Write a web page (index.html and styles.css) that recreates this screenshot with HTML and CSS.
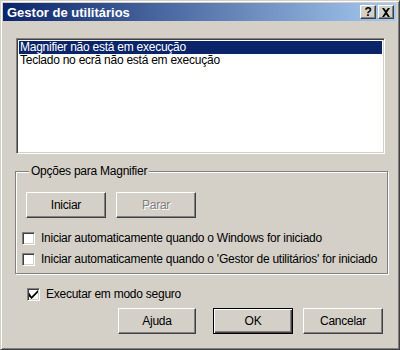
FILE: index.html
```html
<!DOCTYPE html>
<html>
<head>
<meta charset="utf-8">
<link rel="stylesheet" href="styles.css">
</head>
<body>
<div class="window">
  <div class="titlebar">
    <span class="title">Gestor de utilitários</span>
    <div class="tbtns">
      <div class="tbtn"><span class="q">?</span></div>
      <div class="tbtn">
        <svg width="10" height="9" viewBox="0 0 10 9"><path d="M1 0h2l2 2.5L7 0h2L6 4.5 9 9H7L5 6.5 3 9H1l3-4.5z" fill="#000"/></svg>
      </div>
    </div>
  </div>
  <div class="content">
    <div class="listbox">
      <div class="item selected">Magnifier não está em execução</div>
      <div class="item">Teclado no ecrã não está em execução</div>
    </div>
    <fieldset class="group">
      <legend>Opções para Magnifier</legend>
      <div class="row-btns">
        <div class="btn">Iniciar</div>
        <div class="btn disabled">Parar</div>
      </div>
      <div class="checks">
        <label class="check"><span class="box"></span><span>Iniciar automaticamente quando o Windows for iniciado</span></label>
        <label class="check"><span class="box"></span><span>Iniciar automaticamente quando o 'Gestor de utilitários' for iniciado</span></label>
      </div>
    </fieldset>
    <label class="check safe"><span class="box"><svg width="9" height="9" viewBox="0 0 7 7"><path d="M0 2v3l2 2 5-5V-0L2 5z" fill="#000"/></svg></span><span>Executar em modo seguro</span></label>
    <div class="footer">
      <div class="btn help">Ajuda</div>
      <div class="btn default"><span>OK</span></div>
      <div class="btn">Cancelar</div>
    </div>
  </div>
</div>
</body>
</html>
```
FILE: styles.css
```css
html, body {
  margin: 0;
  padding: 0;
  background: #d4d0c8;
}
body {
  font-family: "Liberation Sans", Arial, sans-serif;
  font-size: 12px;
  letter-spacing: -0.25px;
  color: #000;
}
.window {
  width: 400px;
  height: 350px;
  box-sizing: border-box;
  background: #d4d0c8;
  border: 1px solid;
  border-color: #d4d0c8 #404040 #404040 #d4d0c8;
  box-shadow: inset 1px 1px #fff, inset -1px -1px #808080;
  padding: 2px 3px 3px 2px;
  display: flex;
  flex-direction: column;
}
.titlebar {
  height: 18px;
  background: linear-gradient(to right, #0a246a, #a6caf0);
  display: flex;
  align-items: center;
  justify-content: space-between;
  padding: 0 2px 0 4px;
}
.title {
  color: #fff;
  font-weight: bold;
  font-size: 13px;
  letter-spacing: 0;
}
.tbtns {
  display: flex;
  gap: 2px;
}
.tbtn {
  width: 16px;
  height: 14px;
  box-sizing: border-box;
  background: #d4d0c8;
  border: 1px solid;
  border-color: #fff #404040 #404040 #fff;
  box-shadow: inset -1px -1px #808080;
  display: flex;
  align-items: center;
  justify-content: center;
}
.q {
  font-weight: bold;
  font-size: 12px;
  line-height: 12px;
}
.content {
  flex: 1;
  padding: 17px 11px 0 13px;
  display: flex;
  flex-direction: column;
}
.listbox {
  height: 116px;
  box-sizing: border-box;
  background: #fff;
  border: 1px solid;
  border-color: #808080 #fff #fff #808080;
  box-shadow: inset 1px 1px #404040, inset -1px -1px #d4d0c8;
  padding: 2px;
}
.item {
  height: 13px;
  line-height: 13px;
  padding-left: 1px;
  white-space: nowrap;
}
.item.selected {
  background: #0a246a;
  color: #fff;
}
.group {
  margin: 10px 0 0 -1px;
  padding: 14px 10px 6px 10px;
  border: 1px solid #808080;
  box-shadow: inset 1px 1px #fff, 1px 1px #fff;
  width: 369px;
  box-sizing: border-box;
  height: 110px;
}
legend {
  padding: 0 2px;
  margin-left: 3px;
  background: #d4d0c8;
}
.row-btns {
  display: flex;
  gap: 10px;
}
.btn {
  width: 80px;
  height: 26px;
  box-sizing: border-box;
  border: 1px solid;
  border-color: #fff #404040 #404040 #fff;
  box-shadow: inset -1px -1px #808080;
  display: flex;
  align-items: center;
  justify-content: center;
}
.btn.disabled {
  color: #808080;
  text-shadow: 1px 1px #fff;
}
.btn.default {
  border: 1px solid #000;
  box-shadow: inset 1px 1px #fff, inset -1px -1px #404040, inset -2px -2px #808080;
}
.checks {
  margin: 13px 0 0 -4px;
  display: flex;
  flex-direction: column;
  gap: 7px;
}
.check {
  display: flex;
  align-items: center;
  gap: 6px;
  white-space: nowrap;
}
.box {
  width: 13px;
  height: 13px;
  box-sizing: border-box;
  background: #fff;
  border: 1px solid;
  border-color: #808080 #fff #fff #808080;
  box-shadow: inset 1px 1px #404040, inset -1px -1px #d4d0c8;
  display: flex;
  align-items: center;
  justify-content: center;
  flex: none;
}
.check.safe {
  margin: 13px 0 0 11px;
}
.footer {
  margin-top: 7px;
  display: flex;
  justify-content: flex-end;
  gap: 10px;
  padding-right: 2px;
}
.btn.help {
  margin-right: 7px;
  width: 78px;
}
```
